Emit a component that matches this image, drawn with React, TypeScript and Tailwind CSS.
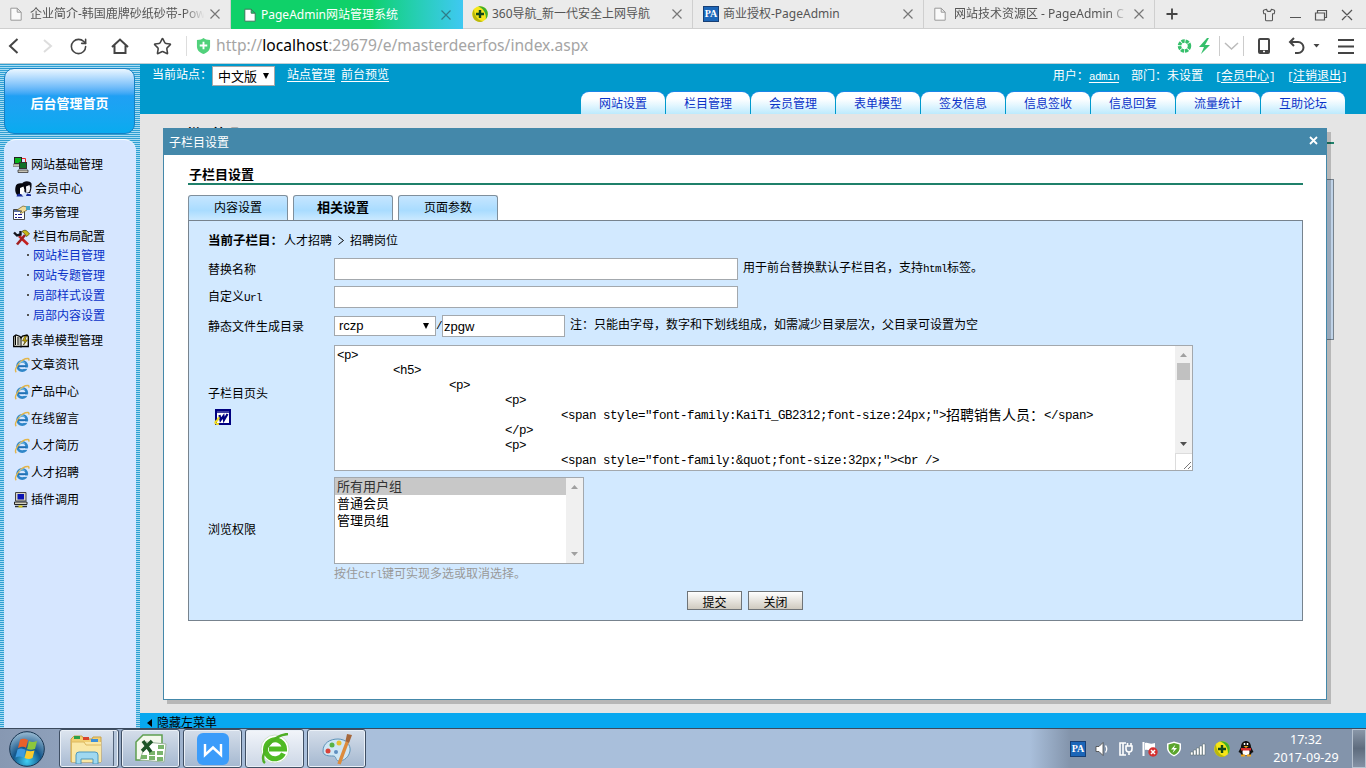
import type { ReactNode } from 'react';
import clsx from 'clsx';
import { RotateCw, Shirt, Star } from 'lucide-react';

const NAV_TABS = ['网站设置', '栏目管理', '会员管理', '表单模型', '签发信息', '信息签收', '信息回复', '流量统计', '互助论坛'];

const SUB_MENU = ['网站栏目管理', '网站专题管理', '局部样式设置', '局部内容设置'];

const HEAD_CODE: [number, string, string?, string?][] = [
  [0, '<p>'],
  [1, '<h5>'],
  [2, '<p>'],
  [3, '<p>'],
  [4, '<span style="font-family:KaiTi_GB2312;font-size:24px;">', '招聘销售人员：', '</span>'],
  [3, '</p>'],
  [3, '<p>'],
  [4, '<span style="font-family:&quot;font-size:32px;"><br />'],
];

// 半角字符，宽度为汉字的一半
function Half({ children }: { children: ReactNode }) {
  return <span className="font-['Liberation_Mono',monospace] text-[11px] tracking-[-0.6px]">{children}</span>;
}

function CloseIcon({ className }: { className?: string }) {
  return (
    <svg viewBox="0 0 10 10" className={clsx('w-[10px] h-[10px] shrink-0', className)} fill="none" stroke="currentColor" strokeWidth="1.2">
      <path d="M.5.5l9 9M9.5.5l-9 9" />
    </svg>
  );
}

function PageIcon({ active = false }: { active?: boolean }) {
  return (
    <svg viewBox="0 0 12 14" className="w-3 h-[14px] shrink-0" fill={active ? '#fff' : '#fafafa'} stroke={active ? '#3a7a5a' : '#9a9a9a'}>
      <path d="M.8 1.2h6.4l4 4v8H.8zM7.2 1.2v4h4" />
    </svg>
  );
}

function PlusBall() {
  return (
    <svg viewBox="0 0 16 16" className="w-4 h-4 shrink-0">
      <circle cx="8" cy="8" r="7.8" fill="#f6e619" />
      <path d="M6 .5A7.800 7.800 0 0 1 15.800 8a7.800 7.800 0 0 1-2 5.200C14.500 8 12 2.500 6 .5z" fill="#3faf2c" />
      <path d="M2 3.2C0 6 0 10 2.2 13.2 5 16.5 9 16.3 11 15.2 6 14.5 2.500 10 2 3.200z" fill="#b9b80c" />
      <path d="M8 4v8M4 8h8" stroke="#12471a" strokeWidth="2.400" />
    </svg>
  );
}

function PaIcon() {
  return (
    <span className="w-4 h-4 shrink-0 bg-[#1c66b8] border border-[#173f75] text-white text-[10px] leading-[14px] flex justify-center font-bold font-['Liberation_Serif',serif]">
      PA
    </span>
  );
}

function IeIcon() {
  return (
    <svg viewBox="0 0 16 16" className="w-4 h-4 shrink-0" fill="none">
      <circle cx="8.200" cy="9" r="4.600" stroke="#2f86c8" strokeWidth="2.800" />
      <path d="M4 9.200h8.500" stroke="#1f6fb4" strokeWidth="2" />
      <path d="M10 11.200h5" stroke="#d6e6ff" strokeWidth="1.400" />
      <path d="M2.200 15.200C-.5 12.500 7 1 14.200 1.500c1 .2.800 1.500.4 2.200" stroke="#e3b548" strokeWidth="1.400" />
      <path d="M5 6.200C6.500 4.600 9 4.500 10.500 5.500" stroke="#8fd0f2" />
    </svg>
  );
}

function ServersIcon() {
  return (
    <svg viewBox="0 0 16 16" className="w-4 h-4 shrink-0">
      <path d="M1 0h8v7H1z" fill="#222" />
      <path d="M2 1h6v5H2z" fill="#0ab41e" />
      <path d="M9 1.500h3.500V5" fill="none" stroke="#e22" />
      <path d="M0 7h7v2.500H0z" fill="#c9c5b8" stroke="#555" strokeWidth=".5" />
      <path d="M6 5h8v7H6z" fill="#333" />
      <path d="M7 6h6v5H7z" fill="#10702a" />
      <path d="M5 13h10v2.500H5z" fill="#c9c5b8" stroke="#222" strokeWidth=".7" />
    </svg>
  );
}

function PeopleIcon() {
  return (
    <svg viewBox="0 0 17 16" className="w-[17px] h-4 shrink-0">
      <path d="M7 3c1-3.500 8-3.500 9.500-.5.3 4-.5 7-1.500 9.500h-4L7 8z" fill="#0a0a14" />
      <path d="M11 5.500L14.500 4l.8 3-1 4-3 1z" fill="#f4f4f8" />
      <path d="M.5 6C1 1.500 8 1.500 9.500 4l.5 4-4 6H2C0 11 0 9 .5 6z" fill="#06060c" />
      <path d="M5 7l3.500-1.500L9.500 9 8 13H5z" fill="#fff" />
      <path d="M1.500 15.500c1-3.500 3-2.500 4-2.500l3 2.500zM11 15l1-2.500 4 1V15z" fill="#182a9a" />
    </svg>
  );
}

function TaskIcon() {
  return (
    <svg viewBox="0 0 17 16" className="w-[17px] h-4 shrink-0">
      <path d="M.5 4.500h11v10H.5z" fill="#fff" stroke="#444" />
      <path d="M1 5h10v2H1z" fill="#5b6fa0" />
      <path d="M2 9.500h2m1 0h4M2 12.500h2m1 0h4" stroke="#1d1d8c" />
      <path d="M4 5l6-4 4 1v3L9 8H7l2-2z" fill="#f0dc9a" stroke="#6a5a20" strokeWidth=".7" />
      <path d="M13 1h4v4h-4z" fill="#4aa8c8" />
    </svg>
  );
}

function ToolsIcon() {
  return (
    <svg viewBox="0 0 18 17" className="w-[18px] h-[17px] shrink-0" fill="none">
      <path d="M6 7l9 8.500" stroke="#c32020" strokeWidth="2.600" />
      <path d="M4 15.500L12 6" stroke="#a02020" strokeWidth="2.600" />
      <path d="M1 3.500l3 3 3.500-1V2" stroke="#14141c" strokeWidth="2.400" />
      <path d="M9 2.500c3-2.500 5-1 7.500 2.500l-3 2.500-2-3z" fill="#c9b818" stroke="#5d5510" strokeWidth=".8" />
    </svg>
  );
}

function BookIcon() {
  return (
    <svg viewBox="0 0 16 14" className="w-4 h-[14px] shrink-0">
      <path d="M.7 2.500L3 1l4 1.500L8 4l1.500-2L14 1l1.300 1.500v10H9L8 13l-1-.5H.7z" fill="#f2f2e4" stroke="#000" strokeWidth="1.300" />
      <path d="M8 3v9M2.500 2v9M4 4h2.500M4 6h2.500M4 8h2.500M4 10h2.500" stroke="#000" />
      <path d="M12 2L9.500 7H12l-1.500 4L14.500 6H12l1.500-4z" fill="#e2c100" stroke="#332b00" strokeWidth=".6" />
    </svg>
  );
}

function ComputerIcon() {
  return (
    <svg viewBox="0 0 14 16" className="w-[14px] h-4 shrink-0">
      <path d="M1.500.5h10.500v8.500H1.500z" fill="#d8d4c4" stroke="#444" />
      <path d="M3.500 2h6.500v5.500H3.500z" fill="#0a14b4" />
      <path d="M.5 10h12.500v2.500H.5z" fill="#d8d4c4" stroke="#222" />
      <path d="M1 14.500h12" stroke="#333" strokeWidth="1.500" />
      <path d="M4.500 14.500h4" stroke="#d8c818" strokeWidth="2" />
    </svg>
  );
}

function WordIcon() {
  return (
    <svg viewBox="0 0 17 16" className="w-[17px] h-4" fill="none">
      <path d="M2 1h14v14H2z" fill="#fff" stroke="#000080" strokeWidth="2" />
      <path d="M2 3h14" stroke="#000080" strokeWidth="1.500" />
      <path d="M5.500 6l1 5 3-4 .5 4 3.500-6" stroke="#000080" strokeWidth="2.200" />
      <path d="M5 15.500c-2-.5-4-1-3.500-2.500.5-1.500 1.500-.5 2-2S4 9 5.500 8.500" stroke="#f0dc20" strokeWidth="2.200" />
    </svg>
  );
}

function BrowserTab({ title, icon, fade = false }: { title: string; icon: ReactNode; fade?: boolean }) {
  return (
    <div className="w-[231px] shrink-0 flex items-center pl-[10px] border-r border-[#cfcfcf] text-[#555]">
      <div className="w-[18px] shrink-0 flex items-center">{icon}</div>
      <span className={clsx('ml-[2px] w-[178px] whitespace-nowrap', fade && '[mask-image:linear-gradient(to_right,black_86%,transparent_98%)]')}>{title}</span>
      <CloseIcon className="ml-auto mr-[10px] text-[#777]" />
    </div>
  );
}

function BrowserChrome() {
  return (
    <header className="h-16 shrink-0 font-['Noto_Sans','Noto_Sans_CJK_SC',sans-serif]">
      <div className="h-[29px] flex bg-[#ebebeb] border-b border-[#cfcfcf] text-[12px] leading-[28px]">
        <BrowserTab title="企业简介-韩国鹿牌砂纸砂带-Pow" icon={<PageIcon />} fade />
        <div className="w-[232px] shrink-0 h-[29px] flex items-center pl-[13px] pr-3 bg-linear-to-r from-[#0fd169] from-60% to-[#3fc8f2] text-white">
          <PageIcon active />
          <span className="ml-[5px]">PageAdmin网站管理系统</span>
          <CloseIcon className="ml-auto text-[#2f7d88]" />
        </div>
        <div className="flex shrink-0 -ml-px">
          <BrowserTab title="360导航_新一代安全上网导航" icon={<PlusBall />} />
          <BrowserTab title="商业授权-PageAdmin" icon={<PaIcon />} />
          <BrowserTab title="网站技术资源区 - PageAdmin C" icon={<PageIcon />} fade />
        </div>
        <div className="flex-1 flex items-center text-[#555]">
          <svg viewBox="0 0 12 12" className="w-3 h-3 ml-[11px] shrink-0" stroke="#444" strokeWidth="1.800"><path d="M6 .5v11M.5 6h11" /></svg>
          <Shirt className="w-[14px] h-[14px] ml-[84px] mt-[2px] shrink-0" strokeWidth={1.800} />
          <svg viewBox="0 0 66 14" className="w-[66px] h-[14px] ml-[14px] mt-[2px] shrink-0" fill="none" stroke="#555" strokeWidth="1.200">
            <path d="M0 9.500h11M25.500 5h9v7h-9zM27.500 5V2.500h9v7h-2M52 2l10 10M62 2L52 12" />
          </svg>
        </div>
      </div>
      <div className="h-[35px] flex items-center bg-white border-b border-[#bfd0d6] text-[#444]">
        <svg viewBox="0 0 170 24" className="w-[170px] h-6 shrink-0" fill="none" stroke="currentColor" strokeWidth="2">
          <path d="M17.500 5L10 12l7.500 7" />
          <path d="M44 6l7 6-7 6" stroke="#ddd" />
          <path d="M112 13l8-7.500 8 7.500M114.500 11.500V19h11v-7.500" />
        </svg>
        <RotateCw className="w-[19px] h-[19px] -ml-[101px] shrink-0" />
        <Star className="w-[19px] h-[19px] ml-[65px] shrink-0" />
        <span className="w-px h-5 bg-[#ddd] ml-[14px]" />
        <svg viewBox="0 0 16 17" className="w-[15px] h-4 ml-[9px] shrink-0">
          <path d="M1 2q5 0 7-2 2 2 7 2v7c0 4-3 6.500-7 8-4-1.500-7-4-7-8z" fill="#51d17b" />
          <path d="M8 4v8M4 8h8" stroke="#fff" strokeWidth="2" />
        </svg>
        <span className="ml-[5px] text-[15.600px] text-[#a5a5a5] whitespace-nowrap">
          http://<span className="text-black">localhost</span>:29679/e/masterdeerfos/index.aspx
        </span>
        <svg viewBox="0 0 190 24" className="w-[190px] h-6 ml-auto shrink-0" fill="none" stroke="#444" strokeWidth="2">
          <circle cx="8.500" cy="12" r="5" stroke="#36bf6b" strokeWidth="3.500" strokeDasharray="3.200 .8" />
          <path d="M31 4l-8 9h5l-3 7 9-9h-5l4-7z" fill="#36bf6b" stroke="none" />
          <path d="M43.500 2v20M67.500 2v20" stroke="#ccc" strokeWidth="1" />
          <path d="M49 9l6.500 6 6.500-6" stroke="#bbb" strokeWidth="1.500" />
          <rect x="83" y="5" width="10" height="14" rx="1" />
          <path d="M83 17.500h10" strokeWidth="3" />
          <path d="M87 17.500h2" stroke="#fff" strokeWidth="1.500" />
          <path d="M115 8h7a5.500 5.500 0 0 1 0 11h-3M118 4l-4 4 4 4" />
          <path d="M137.500 10h6l-3 3.500z" fill="#444" stroke="none" />
          <path d="M162 6h16M162 12.500h16M162 19h16" />
        </svg>
      </div>
    </header>
  );
}

function MenuItem({ icon, label, className, gap = 'gap-[2px]' }: { icon: ReactNode; label: string; className: string; gap?: string }) {
  return (
    <div className={clsx('flex items-center', gap, className)}>
      {icon}
      <span className="-mt-[2px]">{label}</span>
    </div>
  );
}

function Sidebar() {
  return (
    <aside className="w-[140px] shrink-0 px-1 pt-1 flex flex-col bg-[repeating-linear-gradient(to_bottom,#2f9fd2_0px,#2f9fd2_1px,#a9dcf3_1px,#a9dcf3_2px)]">
      <div className="w-[131px] h-[66px] flex items-center justify-center pt-[4px] rounded-[10px] border border-[#1680c4] bg-linear-to-b from-[#eaf6ff] via-[#1fa0f4] via-42% to-[#08abef] text-white text-[13px] font-bold">
        后台管理首页
      </div>
      <nav className="mt-[5px] flex-1 rounded-t-xl border-t border-white bg-[#d6e6ff] pl-[9px] pt-[13px] leading-4 text-black">
        <MenuItem className="h-6" icon={<ServersIcon />} label="网站基础管理" />
        <MenuItem className="h-6 pl-[2px]" gap="gap-[3px]" icon={<PeopleIcon />} label="会员中心" />
        <MenuItem className="h-6" gap="gap-px" icon={<TaskIcon />} label="事务管理" />
        <MenuItem className="h-6" icon={<ToolsIcon />} label="栏目布局配置" />
        <ul className="text-[#0a32c8]">
          {SUB_MENU.map(item => (
            <li key={item} className="h-5 leading-5 pl-[14px] -mt-[4px] mb-[4px] flex items-center">
              <span className="w-[2px] h-[2px] mr-1 bg-[#555]" />
              {item}
            </li>
          ))}
        </ul>
        <MenuItem className="h-6" icon={<BookIcon />} label="表单模型管理" />
        <MenuItem className="h-6 pl-px mb-px" gap="gap-px" icon={<IeIcon />} label="文章资讯" />
        {['产品中心', '在线留言', '人才简历', '人才招聘'].map(item => (
          <MenuItem key={item} className="h-[27px] pl-px" gap="gap-px" icon={<IeIcon />} label={item} />
        ))}
        <MenuItem className="h-[27px] pl-px" gap="gap-[3px]" icon={<ComputerIcon />} label="插件调用" />
      </nav>
    </aside>
  );
}

function TopBar() {
  return (
    <div className="h-[50px] shrink-0 relative bg-[#0099cc] text-white">
      <div className="flex items-start pl-3 pr-[19px] leading-[20px]">
        <span>当前站点：</span>
        <span className="w-[63px] h-5 mt-[2px] flex items-center justify-between pl-[5px] pr-[5px] bg-white border border-[#a9a9a9] text-black text-[13px] leading-4">
          中文版<Caret />
        </span>
        <a className="ml-3 underline underline-offset-2">站点管理</a>
        <a className="ml-[6px] underline underline-offset-2">前台预览</a>
        <div className="ml-auto flex pt-px">
          用户：<a className="underline underline-offset-2"><Half>admin</Half></a>
          <span className="ml-3">部门：未设置</span>
          <span className="ml-3"><Half>[</Half><a className="underline underline-offset-2">会员中心</a><Half>]</Half></span>
          <span className="ml-3"><Half>[</Half><a className="underline underline-offset-2">注销退出</a><Half>]</Half></span>
        </div>
      </div>
      <nav className="absolute left-[441px] bottom-0 flex gap-px">
        {NAV_TABS.map(tab => (
          <a key={tab} className="w-[84px] h-[22px] leading-[22px] text-center rounded-t-[8px] bg-linear-to-b from-white from-30% to-[#bdeafd] text-[#0a32c8] shadow-[0_-1px_0_#1a86e8]">
            {tab}
          </a>
        ))}
      </nav>
    </div>
  );
}

function Caret() {
  return (
    <svg viewBox="0 0 6 6" className="w-[6px] h-[6px] shrink-0"><path d="M0 0h6L3 6z" fill="currentColor" /></svg>
  );
}

function FormRow({ label, className, children }: { label: ReactNode; className: string; children: ReactNode }) {
  return (
    <div className={clsx('flex items-center', className)}>
      <div className="w-[126px] shrink-0">{label}</div>
      {children}
    </div>
  );
}

function ScrollArrow({ down = false, className }: { down?: boolean; className?: string }) {
  return (
    <svg viewBox="0 0 7 4" className={clsx('w-[7px] h-1', className)}>
      <path d={down ? 'M0 0h7L3.500 4z' : 'M0 4h7L3.500 0z'} fill="currentColor" />
    </svg>
  );
}

function CodeArea() {
  return (
    <div className="w-[859px] h-[126px] flex bg-white border border-[#a3a8ad]">
      <pre className="flex-1 overflow-hidden pl-[2px] pt-[3px] font-['Liberation_Mono',monospace] text-[12.500px] tracking-[-0.501px] leading-[15px] text-black">
        {HEAD_CODE.map(([depth, code, text, tail], i) => (
          <div key={i} className="h-[15px] flex items-center" style={{ paddingLeft: depth * 56 }}>
            <span>{code}</span>
            {text && <span className="-mt-[4px] text-[14px] tracking-normal font-['Noto_Sans_CJK_SC',sans-serif]">{text}</span>}
            {tail && <span>{tail}</span>}
          </div>
        ))}
      </pre>
      <div className="w-[17px] flex flex-col items-center bg-[#f0f0f0]">
        <ScrollArrow className="mt-[7px] text-[#a0a0a0]" />
        <span className="mt-[6px] w-[13px] h-[17px] bg-[#c1c1c1]" />
        <ScrollArrow down className="mt-auto mb-[7px] text-[#505050]" />
        <div className="w-[17px] h-[17px] flex items-end justify-end bg-white border-t border-l border-[#dcdcdc]">
          <svg viewBox="0 0 9 9" className="w-[9px] h-[9px]" stroke="#777"><path d="M1 8l7-7M5 8l3-3" /></svg>
        </div>
      </div>
    </div>
  );
}

function GroupList() {
  return (
    <div className="w-[250px] h-[87px] flex bg-white border border-[#a3a8ad] text-[13px] leading-[16px] text-black">
      <ul className="flex-1">
        <li className="h-[17px] pl-[2px] bg-[#c8c8c8] text-[#333]">所有用户组</li>
        <li className="h-[17px] pl-[2px]">普通会员</li>
        <li className="h-[17px] pl-[2px]">管理员组</li>
      </ul>
      <div className="w-[17px] flex flex-col items-center justify-between py-[7px] bg-[#f0f0f0] text-[#a0a0a0]">
        <ScrollArrow />
        <ScrollArrow down />
      </div>
    </div>
  );
}

function Dialog() {
  return (
    <section className="absolute left-[23px] top-[64px] w-[1164px] h-[572px] flex flex-col bg-white border border-[#4488aa] shadow-[4px_4px_0_rgba(0,0,0,0.2)]">
      <div className="h-[26px] shrink-0 flex items-center justify-between pl-[5px] pr-2 bg-[#4488aa] text-white">
        <span>子栏目设置</span>
        <svg viewBox="0 0 9 9" className="w-[9px] h-[9px] -mt-[3px] text-white" stroke="currentColor" strokeWidth="1.800"><path d="M1 1l7 7M8 1L1 8" /></svg>
      </div>
      <div className="px-6 pt-[10px] text-black">
        <h2 className="w-[1115px] h-[20px] pl-[1px] leading-[18px] text-[13px] font-bold border-b-2 border-[#1f806a]">子栏目设置</h2>
        <div className="flex gap-[5px] mt-[10px]">
          {['内容设置', '相关设置', '页面参数'].map((tab, i) => (
            <a key={tab} className={clsx('w-[100px] h-[25px] leading-[22px] text-center rounded-t-[3px] border border-b-0 border-[#7f8f9c] bg-linear-to-b from-[#c6e6ff] via-[#a9dcff] via-60% to-[#cbe9ff]', i === 1 && 'font-bold text-[13px]')}>
              {tab}
            </a>
          ))}
        </div>
        <div className="h-[401px] w-[1115px] pl-[19px] bg-[#d2e9ff] border border-[#77838e]">
          <div className="h-[34px] flex items-center pt-1">
            <b className="text-[12.500px]">当前子栏目：</b><span className="ml-px">人才招聘</span>
            <svg viewBox="0 0 6 9" className="w-[6px] h-[9px] mx-[6px]" fill="none" stroke="#000"><path d="M.5.5l5 4-5 4" /></svg>
            <span>招聘岗位</span>
          </div>
          <FormRow label="替换名称" className="h-7">
            <input className="w-[404px] h-[22px] bg-white border border-[#a3a8ad]" />
            <span className="ml-[5px] -mt-[3px]">用于前台替换默认子栏目名，支持<Half>html</Half>标签。</span>
          </FormRow>
          <FormRow label={<>自定义<Half>Url</Half></>} className="h-7">
            <input className="w-[404px] h-[22px] bg-white border border-[#a3a8ad]" />
          </FormRow>
          <FormRow label="静态文件生成目录" className="h-[30px]">
            <span className="w-[102px] h-5 flex items-center justify-between pl-1 pr-[6px] bg-white border border-[#a3a8ad] text-[13px] font-['Liberation_Sans',sans-serif]">
              rczp<Caret />
            </span>
            <span className="w-[6px] -mt-[3px] text-center"><Half>/</Half></span>
            <input defaultValue="zpgw" className="w-[123px] h-[22px] px-px bg-white border border-[#a3a8ad] text-[13px] font-['Liberation_Sans',sans-serif]" />
            <span className="ml-[5px] -mt-[4px]">注：只能由字母，数字和下划线组成，如需减少目录层次，父目录可设置为空</span>
          </FormRow>
          <FormRow
            label={
              <div className="pb-2">
                子栏目页头
                <div className="pl-[6px] pt-[7px]"><WordIcon /></div>
              </div>
            }
            className="h-[134px]"
          >
            <CodeArea />
          </FormRow>
          <FormRow label="浏览权限" className="h-[108px]">
            <div>
              <GroupList />
              <p className="h-[18px] leading-[18px] text-[#999]">按住<Half>Ctrl</Half>键可实现多选或取消选择。</p>
            </div>
          </FormRow>
          <div className="flex justify-center gap-[6px] mt-[8px] pr-[20px]">
            {['提交', '关闭'].map(label => (
              <button key={label} className="w-[55px] h-[19px] leading-[19px] border border-[#6f7478] bg-linear-to-b from-white to-[#cfcabf]">
                {label}
              </button>
            ))}
          </div>
        </div>
      </div>
    </section>
  );
}

function Taskbar() {
  return (
    <footer className="relative h-10 shrink-0 flex items-center border-t border-[#3b4a5e] bg-linear-to-r from-[#8798b2] via-[#a9bfdb] via-20% to-[#a9bfdb] font-['Noto_Sans',sans-serif]">
      <div className="w-[59px] flex justify-center pr-[5px]">
        <svg viewBox="0 0 36 36" className="w-9 h-9">
          <defs>
            <radialGradient id="orb" cx="50%" cy="85%" r="80%">
              <stop offset="0" stopColor="#3fd0f4" />
              <stop offset=".5" stopColor="#14578c" />
              <stop offset="1" stopColor="#8fb2cc" />
            </radialGradient>
          </defs>
          <circle cx="18" cy="18" r="17.300" fill="url(#orb)" stroke="#173450" />
          <path d="M11 9c3-2 5-1 8 0l-2 8c-3-2-5-1-8 0z" fill="#e8602a" />
          <path d="M20 10c3 1.500 5 1 8 0l-2 8c-3 1-5 1-8 0z" fill="#8cc63c" />
          <path d="M8.500 18.500c3-1.500 5-1 8 .5l-2 7.500c-3-1.500-5-1.500-8 0z" fill="#3e9be0" />
          <path d="M17.500 19.500c3 1 5 1 8 0l-2 7.500c-3 1.500-5 1-8 0z" fill="#fbcb2e" />
        </svg>
      </div>
      <div className="flex gap-[3px]">
        <div className="w-[60px] h-[39px] mr-[-1px] flex items-center justify-center pr-1 rounded-[3px] border border-[#3f4f64] bg-linear-to-b from-[#dde5ef] to-[#a8bad2] shadow-[inset_0_0_0_1px_#eaf0f7,inset_-4px_0_0_#b4c5da,inset_-5px_0_0_#53647a]">
          <svg viewBox="0 0 34 30" className="w-[34px] h-[30px]">
            <path d="M1 5l3-3h8l2 3h8l1-2h8v25H1z" fill="#f1cf72" stroke="#c9a24a" />
            <path d="M4 2h6v3H4z" fill="#2aa04a" />
            <path d="M13 3h6v3h-6z" fill="#d8432c" />
            <path d="M21 5h7v3h-7z" fill="#3e90d8" />
            <path d="M2 8h29v20H2z" fill="#fae8a6" />
            <path d="M2 8h12l2 3h15" fill="none" stroke="#dcb860" />
            <path d="M6 30V21q0-3 3-3h16q3 0 3 3v9h-5v-5H11v5z" fill="#9fd8f0" stroke="#4f98bd" />
          </svg>
        </div>
        <TaskButton>
          <svg viewBox="0 0 32 32" className="w-8 h-8">
            <path d="M8 2h19v25H1V9z" fill="#f3f8ec" stroke="#5f9f50" strokeWidth="1.500" />
            <path d="M11 9l20 2-2 18-24-2z" fill="#fff" stroke="#9ab49a" />
            <path d="M23 12h6v4h-6zM22 18h6v4h-6zM14 18h6v4h-6zM6 22h6v4H6zM14 23h6v4h-6zM22 24h6v4h-6z" fill="#7ab56c" />
            <path d="M8 8l8 11M17 8L7 18" stroke="#1c5426" strokeWidth="3.500" />
          </svg>
        </TaskButton>
        <TaskButton>
          <svg viewBox="0 0 32 32" className="w-8 h-8">
            <rect width="32" height="32" rx="6" fill="#3b9cfa" />
            <path d="M8 11v11l8-7.500 8 7.500V11" fill="none" stroke="#fff" strokeWidth="2.400" />
          </svg>
        </TaskButton>
        <TaskButton active>
          <svg viewBox="0 0 32 32" className="w-8 h-8" fill="none">
            <circle cx="16" cy="16" r="14" fill="#fff" stroke="#cfe0cf" />
            <path d="M24.500 20.500a9.500 9.500 0 1 1 1-4.500H10" stroke="#4fbb22" strokeWidth="5" />
            <path d="M6 30C-1 24 12 2 29 1" stroke="#4fae25" strokeWidth="2.500" />
          </svg>
        </TaskButton>
        <TaskButton>
          <svg viewBox="0 0 32 32" className="w-8 h-8">
            <path d="M2 18C2 10 9 6 17 6s13 6 12 12-6 10-11 10c-4 0-2-5-6-5s-10 0-10-5z" fill="#cfe6f4" stroke="#5e93b8" />
            <circle cx="7" cy="18" r="2.500" fill="#d8433a" />
            <circle cx="11" cy="12" r="2.500" fill="#58b244" />
            <circle cx="18" cy="10" r="2.500" fill="#e8c032" />
            <circle cx="15" cy="19" r="2" fill="#5f8fc0" />
            <path d="M27 7L18 31" stroke="#dc8b3c" strokeWidth="3.500" />
            <path d="M24.500 8l1.500-7 5 1-3 8z" fill="#a5673c" />
          </svg>
        </TaskButton>
      </div>
      <div className="ml-auto w-[336px] h-[39px] flex items-center pl-10 bg-linear-to-r from-transparent to-[#8394ab] to-12% text-white">
        <div className="flex items-center gap-2">
          <PaIcon />
          <svg viewBox="0 0 16 16" className="w-4 h-4"><path d="M2 5.500h3l4-4v13l-4-4H2z" fill="#fff" stroke="#444" strokeWidth=".8" /><path d="M11.500 4.500q2.500 3.500 0 7" fill="none" stroke="#fff" strokeWidth="1.300" /></svg>
          <svg viewBox="0 0 16 16" className="w-4 h-4" fill="none" stroke="#fff" strokeWidth="1.600"><path d="M8 2H2v12h6M5 2v12M8 5v3q0 3 3 3t3-3V5H8zM9.500 5V2M13 5V2M11 11v3" /></svg>
          <svg viewBox="0 0 16 16" className="w-4 h-4"><path d="M1.500 1v14" stroke="#fff" strokeWidth="2" /><path d="M3 2c4-1 4 2 10 0v7c-5 2-6-1-10 0z" fill="#fff" /><circle cx="11" cy="11" r="4.700" fill="#d53030" /><path d="M9 9l4 4M13 9l-4 4" stroke="#fff" strokeWidth="1.500" /></svg>
          <svg viewBox="0 0 16 16" className="w-4 h-4"><path d="M8 .5l7 2V8q-1 5-7 7.500Q2 13 1 8V2.500z" fill="#fff" /><path d="M8 2l5.500 1.500V8q-1 4-5.500 6-4.500-2-5.500-6V3.500z" fill="#5aa52c" /><path d="M9.500 3.500L5 8.500h3L6.500 12 11 7H8z" fill="#fff" /></svg>
          <svg viewBox="0 0 16 16" className="w-4 h-4" fill="#fff" stroke="#566" strokeWidth=".5"><path d="M.5 11h2.500v3H.5zM3.500 9H6v5H3.500zM6.500 7H9v7H6.500zM9.500 5H12v9H9.500zM12.500 3H15v11h-2.500z" /></svg>
          <PlusBall />
          <svg viewBox="0 0 16 16" className="w-4 h-4">
            <path d="M3 6c0-8 10-8 10 0l2.500 5-2 1-1 3h-9l-1-3-2-1z" fill="#111" />
            <ellipse cx="8" cy="11" rx="3.500" ry="3.500" fill="#fff" />
            <path d="M3 7h10v2.500H3z" fill="#d92c2c" />
            <path d="M5.500 5h5L8 7z" fill="#f2a51c" />
            <path d="M6.500 2v2M9.500 2v2" stroke="#fff" strokeWidth="1.500" />
            <path d="M3 14.500h4M9 14.500h4" stroke="#f2a51c" strokeWidth="2" />
          </svg>
        </div>
        <div className="ml-[18px] w-[68px] text-center text-[12.500px] leading-[18px] whitespace-nowrap">
          <div>17:32</div>
          <div>2017-09-29</div>
        </div>
        <div className="ml-auto w-[14px] h-[39px] border border-[#b6c2d0] bg-linear-to-b from-[#8a97a8] via-[#5e6c7e] to-[#8492a5]" />
      </div>
    </footer>
  );
}

function TaskButton({ active = false, children }: { active?: boolean; children: ReactNode }) {
  return (
    <div
      className={clsx(
        'w-[59px] h-[39px] flex items-center justify-center rounded-[3px] border border-[#3f4f64] bg-linear-to-b shadow-[inset_0_0_0_1px_#eaf0f7]',
        active ? 'from-[#f2f5fa] to-[#ccd7e6]' : 'from-[#d5deea] to-[#a5b8d0]',
      )}
    >
      {children}
    </div>
  );
}

export default function App() {
  return (
    <div className="w-[1366px] h-[768px] overflow-hidden flex flex-col font-['Noto_Sans_CJK_SC',sans-serif] text-[12px]">
      <BrowserChrome />
      <div className="flex-1 min-h-0 flex">
        <Sidebar />
        <main className="relative flex-1 flex flex-col bg-[#e5e5e5]">
          <TopBar />
          <div className="flex-1 min-h-0 overflow-hidden pl-[47px] pr-8 pt-[10px] text-black">
            <h1 className="h-[20px] leading-[17px] text-[13px] font-bold border-b-2 border-[#1f806a]">栏目管理</h1>
            <div className="mt-[35px] h-[161px] bg-[#c0d3e8] border border-[#77838e]" />
          </div>
          <div className="h-[15px] shrink-0 flex items-center pl-[7px] bg-[#08a8f0] text-black leading-[15px]">
            <svg viewBox="0 0 5 8" className="w-[5px] h-2 mr-[5px] mt-[5px]"><path d="M5 0v8L0 4z" /></svg>
            <span className="mt-[2px]">隐藏左菜单</span>
          </div>
          <Dialog />
        </main>
      </div>
      <Taskbar />
    </div>
  );
}
